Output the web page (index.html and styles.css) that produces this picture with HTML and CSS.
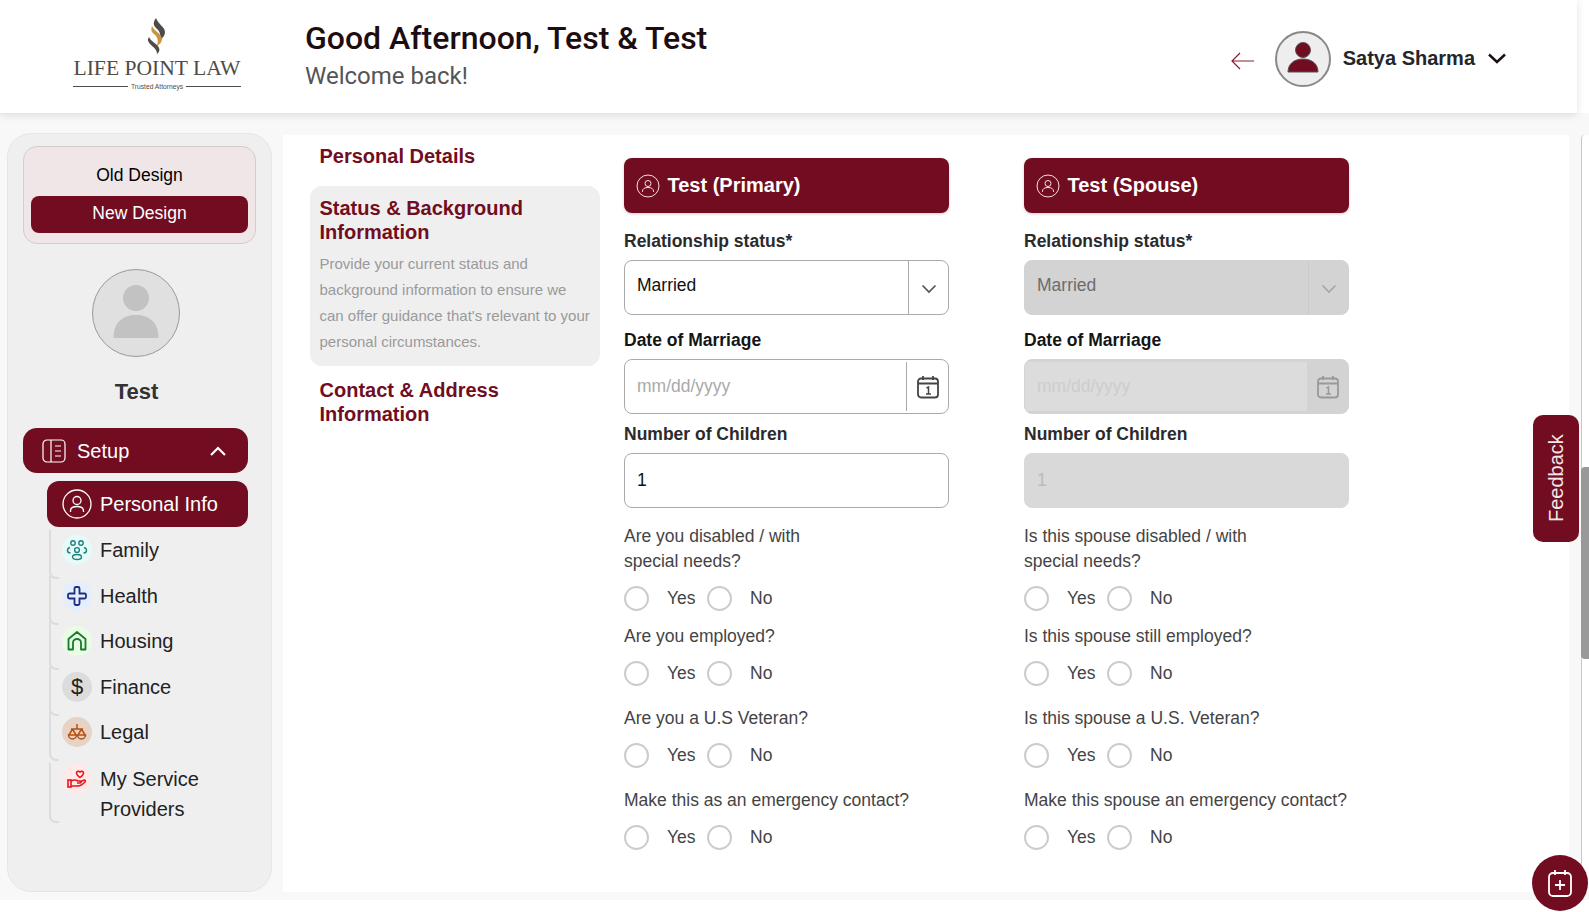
FILE: index.html
```html
<!DOCTYPE html>
<html lang="en">
<head>
    <meta charset="UTF-8">
    <meta name="viewport" content="width=device-width, initial-scale=1.0">
    <title>Life Point Law - Personal Info</title>
    <link rel="stylesheet" href="styles.css">
</head>
<body>
    <header class="topbar">
        <div class="logo">
            <svg class="logo-mark" width="18" height="37" viewBox="0 0 18 37">
                <path fill="#4f4b46" d="M8 0C5 4 5 7 8 10c3 2.500 5 5 4 12 3-2 5-5 5-8 0-5-7-8-9-14z"/>
                <path fill="#c6963f" d="M4 8c-1 3-1 6 2 8 3 2.500 5 6 3 12 3-2 5-4 5-7 0-5-8-8-10-13z"/>
                <path fill="#4f4b46" d="M1 19c-2 3-1 5 1 7 3 3 7 5 7 10 2-2 3-3 2-6-1-4-8-6-10-11z"/>
            </svg>
            <div class="logo-name">LIFE POINT LAW</div>
            <div class="logo-tag"><span>Trusted Attorneys</span></div>
        </div>
        <div class="greeting">
            <h1>Good Afternoon, Test &amp; Test</h1>
            <p>Welcome back!</p>
        </div>
        <div class="account">
            <svg class="back-arrow" width="24" height="18" viewBox="0 0 24 18" fill="none" stroke="#8a1f35" stroke-width="1.2">
                <path d="M1 9h22M9 1L1 9l8 8"/>
            </svg>
            <div class="account-avatar">
                <svg width="40" height="40" viewBox="0 0 40 40">
                    <circle cx="20" cy="11" r="7.5" fill="#720d21" stroke="#555" stroke-width="1"/>
                    <path d="M5 33c0-8 6-13 15-13s15 5 15 13z" fill="#720d21" stroke="#555" stroke-width="1"/>
                </svg>
            </div>
            <span class="account-name">Satya Sharma</span>
            <svg width="18" height="11" viewBox="0 0 18 11" fill="none" stroke="#1d0d10" stroke-width="2.4">
                <path d="M1 1.5l8 7.5 8-7.5"/>
            </svg>
        </div>
    </header>

    <div class="layout">
        <aside class="sidebar">
            <div class="design-toggle">
                <div class="design-old">Old Design</div>
                <div class="design-new">New Design</div>
            </div>
            <div class="profile-pic">
                <svg width="60" height="60" viewBox="0 0 60 60" fill="#c2c2c2">
                    <circle cx="30" cy="15" r="13"/>
                    <path d="M7.500 54c0-14 9-22 22.500-22s22.500 8 22.500 22c0 .8-1 1-2 1H9.500c-1 0-2-.2-2-1z"/>
                </svg>
            </div>
            <div class="profile-name">Test</div>

            <div class="menu-head">
                <svg width="24" height="24" viewBox="0 0 24 24" fill="none" stroke="#fff" stroke-width="1.2">
                    <rect x="1" y="1" width="22" height="22" rx="4"/>
                    <path d="M9 1v22M13 7h6M13 12h6M13 17h6"/>
                </svg>
                <span>Setup</span>
                <svg class="menu-caret" width="16" height="10" viewBox="0 0 16 10" fill="none" stroke="#fff" stroke-width="2.2">
                    <path d="M1 9l7-7 7 7"/>
                </svg>
            </div>
            <ul class="submenu">
                <li class="sub-item active">
                    <span class="sub-icon">
                        <svg width="30" height="30" viewBox="0 0 30 30" fill="none" stroke="#fff" stroke-width="1.3">
                            <circle cx="15" cy="15" r="14"/>
                            <circle cx="15" cy="11.500" r="4"/>
                            <path d="M8.500 23v-1c0-3 2.500-4.500 6.500-4.500s6.500 1.500 6.500 4.500v1"/>
                        </svg>
                    </span>
                    Personal Info
                </li>
                <li class="sub-item">
                    <span class="sub-icon icon-family">
                        <svg width="22" height="22" viewBox="0 0 22 22" fill="none" stroke="#20807c" stroke-width="1.400">
                            <circle cx="7" cy="4" r="2.200"/><circle cx="15" cy="4" r="2.200"/>
                            <circle cx="11" cy="11" r="2.400"/>
                            <path d="M4 8.500C2 9 1.500 10 1.500 11.500S3 14 4.500 14M18 8.500c2 .5 2.500 1.500 2.500 3S19 14 17.500 14"/>
                            <ellipse cx="11" cy="18" rx="4.500" ry="2.500"/>
                        </svg>
                    </span>
                    Family
                </li>
                <li class="sub-item">
                    <span class="sub-icon icon-health">
                        <svg width="20" height="20" viewBox="0 0 20 20" fill="none" stroke="#1c2f80" stroke-width="1.800">
                            <path d="M7.500 2.500c0-.8.500-1.500 1.500-1.500h2c1 0 1.500.7 1.500 1.500v5h5c.8 0 1.500.5 1.500 1.500v2c0 1-.7 1.500-1.500 1.500h-5v5c0 .8-.5 1.500-1.500 1.500H9c-1 0-1.500-.7-1.500-1.500v-5h-5C1.700 12.500 1 12 1 11V9c0-1 .7-1.500 1.500-1.500h5z"/>
                        </svg>
                    </span>
                    Health
                </li>
                <li class="sub-item">
                    <span class="sub-icon icon-housing">
                        <svg width="20" height="20" viewBox="0 0 20 20" fill="none" stroke="#177a2c" stroke-width="1.800" stroke-linejoin="round">
                            <path d="M1.500 18.500V8L10 1l8.500 7v10.500h-4.500V11.500a4 3.500 0 0 0-8 0v7z"/>
                        </svg>
                    </span>
                    Housing
                </li>
                <li class="sub-item">
                    <span class="sub-icon icon-finance">$</span>
                    Finance
                </li>
                <li class="sub-item">
                    <span class="sub-icon icon-legal">
                        <svg width="20" height="20" viewBox="0 0 20 20" fill="none" stroke="#b9500f" stroke-width="1.500">
                            <path d="M10 2v5M4 7h12M5.500 7L2 13M5.500 7L9 13M14.500 7L11 13M14.500 7L18 13"/>
                            <path d="M1.500 13h8a4 4 0 0 1-8 0zM10.500 13h8a4 4 0 0 1-8 0z"/>
                        </svg>
                    </span>
                    Legal
                </li>
                <li class="sub-item sub-item-long">
                    <span class="sub-icon icon-service">
                        <svg width="20" height="20" viewBox="0 0 20 20" fill="none" stroke="#e8141c" stroke-width="1.600">
                            <path d="M13 8.500C10.500 6.500 9.500 5.500 9.500 4c0-1.500 2-2.500 3.500-1 1.500-1.500 3.500-.5 3.500 1 0 1.500-1 2.500-3.500 4.500z"/>
                            <rect x="1" y="11" width="3" height="7"/>
                            <path d="M4 12c3-1.500 5-1.500 7 0h2c1.500 0 1.500 2 0 2h-3M4 17h7c2 0 5-2 7-4 1-1 0-2.500-1.500-1.800L13 13"/>
                        </svg>
                    </span>
                    <span>My Service<br>Providers</span>
                </li>
            </ul>
        </aside>

        <main class="panel">
            <section class="steps">
                <div class="step step-first"><h3>Personal Details</h3></div>
                <div class="step step-active">
                    <h3>Status &amp; Background Information</h3>
                    <p>Provide your current status and background information to ensure we can offer guidance that's relevant to your personal circumstances.</p>
                </div>
                <div class="step step-last"><h3>Contact &amp; Address Information</h3></div>
            </section>

            <section class="person">
                <div class="person-head">
                    <svg width="24" height="24" viewBox="0 0 24 24" fill="none" stroke="#f3dfe3" stroke-width="1">
                        <circle cx="12" cy="12" r="11"/>
                        <circle cx="12" cy="9.500" r="3"/>
                        <path d="M6.500 18v-.8c0-2.400 2-3.700 5.500-3.700s5.500 1.300 5.500 3.700v.8"/>
                    </svg>
                    Test (Primary)
                </div>
                <label class="field-label">Relationship status*</label>
                <div class="select">
                    <span class="select-value">Married</span>
                    <span class="select-arrow">
                        <svg width="16" height="10" viewBox="0 0 16 10" fill="none" stroke="#555" stroke-width="1.700"><path d="M1.500 1.500L8 8l6.500-6.500"/></svg>
                    </span>
                </div>
                <label class="field-label label-date">Date of Marriage</label>
                <div class="date">
                    <input class="date-input" type="text" placeholder="mm/dd/yyyy">
                    <span class="date-icon">
                        <svg width="22" height="24" viewBox="0 0 22 24" fill="none" stroke="#444" stroke-width="1.800">
                            <rect x="1" y="3.500" width="20" height="19" rx="3"/>
                            <path d="M1 8.500h20M6 1v4M16 1v4"/>
                            <path d="M9.500 13l2-1v7M9 19h5" stroke-width="1.500"/>
                        </svg>
                    </span>
                </div>
                <label class="field-label label-num">Number of Children</label>
                <input class="text-input" type="text" value="1">

                <p class="question q-first">Are you disabled / with<br>special needs?</p>
                <div class="radios"><input type="radio" name="a1"><span>Yes</span><input type="radio" name="a1"><span>No</span></div>
                <p class="question q-near">Are you employed?</p>
                <div class="radios"><input type="radio" name="a2"><span>Yes</span><input type="radio" name="a2"><span>No</span></div>
                <p class="question">Are you a U.S Veteran?</p>
                <div class="radios"><input type="radio" name="a3"><span>Yes</span><input type="radio" name="a3"><span>No</span></div>
                <p class="question">Make this as an emergency contact?</p>
                <div class="radios"><input type="radio" name="a4"><span>Yes</span><input type="radio" name="a4"><span>No</span></div>
            </section>

            <section class="person person-disabled">
                <div class="person-head">
                    <svg width="24" height="24" viewBox="0 0 24 24" fill="none" stroke="#f3dfe3" stroke-width="1">
                        <circle cx="12" cy="12" r="11"/>
                        <circle cx="12" cy="9.500" r="3"/>
                        <path d="M6.500 18v-.8c0-2.400 2-3.700 5.500-3.700s5.500 1.300 5.500 3.700v.8"/>
                    </svg>
                    Test (Spouse)
                </div>
                <label class="field-label">Relationship status*</label>
                <div class="select">
                    <span class="select-value">Married</span>
                    <span class="select-arrow">
                        <svg width="16" height="10" viewBox="0 0 16 10" fill="none" stroke="#a5a5a5" stroke-width="1.700"><path d="M1.500 1.500L8 8l6.500-6.500"/></svg>
                    </span>
                </div>
                <label class="field-label label-date">Date of Marriage</label>
                <div class="date">
                    <input class="date-input" type="text" placeholder="mm/dd/yyyy" disabled>
                    <span class="date-icon">
                        <svg width="22" height="24" viewBox="0 0 22 24" fill="none" stroke="#999" stroke-width="1.800">
                            <rect x="1" y="3.500" width="20" height="19" rx="3"/>
                            <path d="M1 8.500h20M6 1v4M16 1v4"/>
                            <path d="M9.500 13l2-1v7M9 19h5" stroke-width="1.500"/>
                        </svg>
                    </span>
                </div>
                <label class="field-label label-num">Number of Children</label>
                <input class="text-input" type="text" value="1" disabled>

                <p class="question q-first">Is this spouse disabled / with<br>special needs?</p>
                <div class="radios"><input type="radio" name="b1"><span>Yes</span><input type="radio" name="b1"><span>No</span></div>
                <p class="question q-near">Is this spouse still employed?</p>
                <div class="radios"><input type="radio" name="b2"><span>Yes</span><input type="radio" name="b2"><span>No</span></div>
                <p class="question">Is this spouse a U.S. Veteran?</p>
                <div class="radios"><input type="radio" name="b3"><span>Yes</span><input type="radio" name="b3"><span>No</span></div>
                <p class="question">Make this spouse an emergency contact?</p>
                <div class="radios"><input type="radio" name="b4"><span>Yes</span><input type="radio" name="b4"><span>No</span></div>
            </section>
        </main>

        <div class="scrollbar"><div class="scrollbar-thumb"></div></div>
    </div>

    <button class="feedback">Feedback</button>
    <button class="fab">
        <svg width="26" height="28" viewBox="0 0 26 28" fill="none" stroke="#fff" stroke-width="1.800">
            <rect x="2" y="4" width="22" height="23" rx="4"/>
            <path d="M8 1v5M18 1v5M13 11v10M8 16h10"/>
        </svg>
    </button>
</body>
</html>
```

FILE: styles.css
```css
* {
    box-sizing: border-box;
}
body {
    margin: 0;
    height: 912px;
    overflow: hidden;
    background: #fff;
    font-family: "Liberation Sans", Arial, sans-serif;
    color: #222;
}
p, h1, h3, ul {
    margin: 0;
    padding: 0;
}

/* top bar */
.topbar {
    display: flex;
    align-items: center;
    width: 1577px;
    height: 113px;
    padding: 0 71px 0 73px;
    background: #fff;
    box-shadow: 0 2px 8px rgba(0, 0, 0, 0.12);
    position: relative;
    z-index: 1;
}
.logo {
    width: 168px;
    margin-top: -5px;
    display: flex;
    flex-direction: column;
    align-items: center;
    color: #4f4b46;
}
.logo-name {
    font-family: "Liberation Serif", serif;
    font-size: 21.600px;
    line-height: 27px;
    white-space: nowrap;
}
.logo-tag {
    width: 100%;
    display: flex;
    align-items: center;
    gap: 3px;
    font-size: 6.700px;
    line-height: 8px;
    margin-top: 1px;
    white-space: nowrap;
}
.logo-tag::before,
.logo-tag::after {
    content: "";
    flex: 1;
    border-top: 1px solid #4f4b46;
}
.greeting {
    margin-left: 64px;
    margin-top: -2px;
}
.greeting h1 {
    font-family: Roboto, sans-serif;
    font-size: 32px;
    font-weight: 500;
    line-height: 36px;
    color: #1d0d10;
}
.greeting p {
    font-family: Roboto, sans-serif;
    font-size: 24px;
    line-height: 32px;
    margin-top: 4px;
    color: #555;
}
.account {
    margin-left: auto;
    padding-top: 4px;
    display: flex;
    align-items: center;
}
.back-arrow {
    margin-right: 20px;
    margin-top: 4px;
}
.account-avatar {
    width: 56px;
    height: 56px;
    border-radius: 50%;
    border: 2px solid #888;
    background: #eee;
    display: flex;
    align-items: center;
    justify-content: center;
}
.account-name {
    font-size: 20px;
    font-weight: bold;
    color: #23262b;
    margin: 0 13px 0 12px;
}

/* page under the bar */
.layout {
    display: flex;
    height: 787px;
    padding: 20px 0 8px 7px;
    background: #f8f8f8;
}
.sidebar {
    width: 265px;
    flex-shrink: 0;
    background: #efefef;
    border: 1px solid #e6e6e6;
    border-radius: 24px;
    padding: 12px 23px 0 15px;
    position: relative;
}
.design-toggle {
    width: 233px;
    height: 98px;
    padding: 7px 7px 0;
    background: #f0e6e8;
    border: 1px solid #d2cdce;
    border-radius: 14px;
    text-align: center;
    font-size: 17.500px;
    color: #000;
}
.design-old {
    height: 42px;
    line-height: 42px;
}
.design-new {
    height: 37px;
    line-height: 35px;
    background: #720d21;
    color: #fff;
    border-radius: 8px;
}
.profile-pic {
    width: 88px;
    height: 88px;
    margin: 25px 0 0 69px;
    border-radius: 50%;
    background: #e0e0e0;
    border: 1px solid #9a9a9a;
    display: flex;
    align-items: center;
    justify-content: center;
}
.profile-name {
    width: 227px;
    margin-top: 22px;
    text-align: center;
    font-size: 22px;
    line-height: 26px;
    font-weight: bold;
    color: #333;
}
.menu-head {
    display: flex;
    align-items: center;
    height: 45px;
    margin-top: 23px;
    padding: 0 22px 0 19px;
    background: #720d21;
    color: #fff;
    font-size: 20px;
    border-radius: 14px;
}
.menu-head span {
    margin-left: 11px;
    padding-top: 1px;
}
.menu-caret {
    margin-left: auto;
}
.submenu {
    list-style: none;
    margin: 8px 0 0 26px;
}
.sub-item {
    display: flex;
    align-items: flex-start;
    gap: 8px;
    height: 45.500px;
    padding: 0 0 0 13px;
    font-size: 20px;
    line-height: 30px;
    color: #222;
    position: relative;
}
.sub-item::before {
    content: "";
    position: absolute;
    left: 0;
    top: -5px;
    width: 8px;
    height: 47px;
    border-left: 2px solid #dcdcdc;
    border-bottom: 2px solid #dcdcdc;
    border-bottom-left-radius: 7px;
}
.sub-item.active {
    height: 46px;
    margin: 0 0 8px -2px;
    padding: 8px 0 0 15px;
    background: #720d21;
    color: #fff;
    border-radius: 12px;
}
.sub-item.active::before {
    display: none;
}
.sub-item-long {
    height: 60px;
    margin-top: 1px;
}
.sub-item-long::before {
    top: -1px;
    height: 58px;
}
.sub-icon {
    width: 30px;
    height: 30px;
    flex-shrink: 0;
    border-radius: 50%;
    display: flex;
    align-items: center;
    justify-content: center;
}
.icon-family { background: #e6fbf9; }
.icon-health { background: #e4eefc; }
.icon-housing { background: #e9fde4; }
.icon-finance { background: #dcdcdc; font-size: 22px; color: #222; }
.icon-legal { background: #e6d3c6; }
.icon-service { background: #ffe9e9; }

/* main white panel */
.panel {
    width: 1286px;
    margin-left: 11px;
    margin-top: 2px;
    background: #fff;
    display: flex;
    align-items: flex-start;
    padding-left: 27px;
}
.steps {
    width: 290px;
    padding-top: 5px;
    color: #720d21;
}
.step h3 {
    font-size: 20px;
    line-height: 24px;
    color: #720d21;
}
.step-first {
    padding: 4px 9.500px;
    margin-bottom: 14px;
}
.step-active {
    padding: 10px 8px 10px 9.500px;
    background: #efefef;
    border-radius: 12px;
    height: 180px;
}
.step-active p {
    font-size: 15px;
    line-height: 26px;
    margin-top: 7px;
    color: #9a9a9a;
}
.step-last {
    padding: 4px 9.500px;
    margin-top: 8px;
}
.person {
    width: 325px;
    padding-top: 23px;
    margin-left: 24px;
}
.person-disabled {
    margin-left: 75px;
}
.person-head {
    display: flex;
    align-items: center;
    gap: 7.500px;
    height: 55px;
    padding: 0 12px;
    background: #720d21;
    color: #fff;
    font-size: 20px;
    font-weight: bold;
    border-radius: 8px;
    box-shadow: 0 1px 3px rgba(0, 0, 0, 0.2);
}
.field-label {
    display: block;
    font-size: 17.500px;
    font-weight: bold;
    line-height: 22px;
    margin-top: 17px;
    margin-bottom: 8px;
    color: #2b2b2b;
}
.label-date {
    margin-top: 14px;
    color: #151515;
}
.label-num {
    margin-top: 9px;
}
.select {
    display: flex;
    height: 55px;
    border: 1px solid #aaa;
    border-radius: 8px;
    font-size: 17.500px;
    color: #111;
}
.select-value {
    flex: 1;
    padding: 13px 0 0 12px;
    line-height: 22px;
}
.select-arrow {
    width: 40px;
    border-left: 1px solid #aaa;
    display: flex;
    align-items: center;
    justify-content: center;
    padding-top: 2px;
}
.date {
    display: flex;
    height: 55px;
    border: 1px solid #aaa;
    border-radius: 8px;
    padding: 2px 0;
}
.date-input {
    flex: 1;
    min-width: 0;
    border: none;
    border-right: 1px solid #aaa;
    background: transparent;
    padding: 0 0 0 12px;
    font: 17.500px "Liberation Sans", Arial, sans-serif;
    outline: none;
}
.date-input::placeholder {
    color: #aaa;
}
.date-icon {
    width: 41px;
    display: flex;
    align-items: center;
    justify-content: center;
}
.text-input {
    display: block;
    width: 100%;
    height: 55px;
    border: 1px solid #aaa;
    border-radius: 8px;
    padding: 0 12px;
    background: #fff;
    font: 17.500px "Liberation Sans", Arial, sans-serif;
    color: #111;
    outline: none;
}
.question {
    font-size: 17.500px;
    line-height: 25px;
    margin-top: 20px;
    color: #444;
}
.q-first {
    margin-top: 16px;
}
.q-near {
    margin-top: 13px;
}
.radios {
    display: flex;
    align-items: center;
    height: 25px;
    margin-top: 12px;
    font-size: 17.500px;
    color: #444;
}
.radios input {
    appearance: none;
    width: 25px;
    height: 25px;
    margin: 0;
    border: 2px solid #ccc;
    border-radius: 50%;
    background: #fff;
}
.radios span {
    margin-left: 18px;
    margin-right: 10px;
    width: 30px;
}

/* disabled spouse column */
.person-disabled .select {
    background: #d3d3d3;
    border-color: #d3d3d3;
    color: #6c6c6c;
}
.person-disabled .select-arrow {
    border-left-color: #cacaca;
}
.person-disabled .date {
    background: #d3d3d3;
    border-color: #d3d3d3;
}
.person-disabled .date-input {
    background: #dcdcdc;
    border-right: none;
    border-radius: 4px 0 0 4px;
}
.person-disabled .date-input::placeholder {
    color: #cdcdcd;
}
.person-disabled .text-input {
    background: #d9d9d9;
    border-color: #d9d9d9;
    color: #bbb;
}

.scrollbar {
    width: 8px;
    margin-left: 12px;
    margin-top: 2px;
    background: #fff;
    border-left: 1px solid #c8c8c8;
    border-radius: 4px 0 0 0;
    position: relative;
}
.scrollbar-thumb {
    position: absolute;
    top: 332px;
    left: -1px;
    width: 8px;
    height: 192px;
    background: #999;
    border-radius: 4px 0 0 4px;
}

/* floating buttons */
.feedback {
    position: absolute;
    left: 1533px;
    top: 415px;
    width: 46px;
    height: 127px;
    padding: 0;
    border: none;
    border-radius: 10px;
    background: #720d21;
    color: #f4e6e8;
    font: 20px "Liberation Sans", Arial, sans-serif;
    writing-mode: vertical-rl;
    transform: rotate(180deg);
}
.fab {
    position: absolute;
    left: 1532px;
    top: 855px;
    width: 56px;
    height: 56px;
    padding: 0;
    border: none;
    border-radius: 50%;
    background: #720d21;
    display: flex;
    align-items: center;
    justify-content: center;
}
```
